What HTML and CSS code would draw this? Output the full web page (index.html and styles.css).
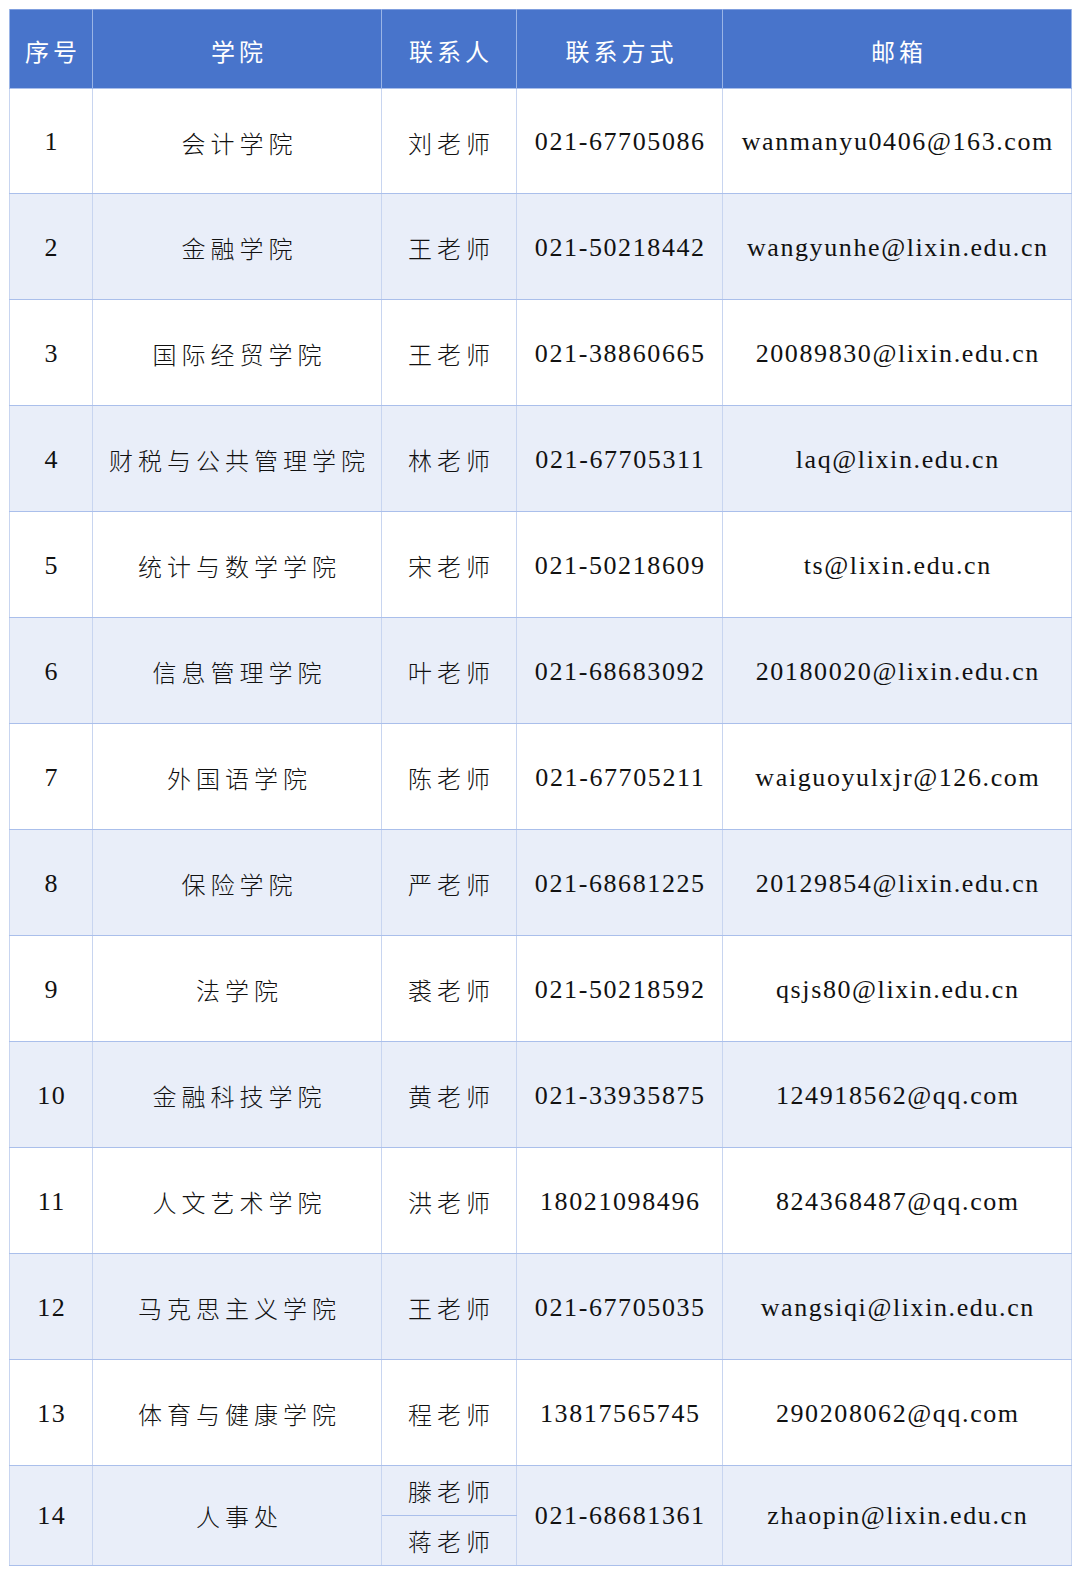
FILE: index.html
```html
<!DOCTYPE html>
<html lang="zh-CN">
<head>
<meta charset="utf-8">
<title>联系方式</title>
<link rel="stylesheet" href="styles.css">
</head>
<body>
<table class="contacts">
  <colgroup>
    <col class="c-no"><col class="c-school"><col class="c-person"><col class="c-phone"><col class="c-mail">
  </colgroup>
  <thead>
    <tr class="head"><th>序号</th><th>学院</th><th>联系人</th><th>联系方式</th><th>邮箱</th></tr>
  </thead>
  <tbody>
    <tr class="row first"><td class="lat">1</td><td class="zh">会计学院</td><td class="zh">刘老师</td><td class="lat">021-67705086</td><td class="lat">wanmanyu0406@163.com</td></tr>
    <tr class="row alt"><td class="lat">2</td><td class="zh">金融学院</td><td class="zh">王老师</td><td class="lat">021-50218442</td><td class="lat">wangyunhe@lixin.edu.cn</td></tr>
    <tr class="row"><td class="lat">3</td><td class="zh">国际经贸学院</td><td class="zh">王老师</td><td class="lat">021-38860665</td><td class="lat">20089830@lixin.edu.cn</td></tr>
    <tr class="row alt"><td class="lat">4</td><td class="zh">财税与公共管理学院</td><td class="zh">林老师</td><td class="lat">021-67705311</td><td class="lat">laq@lixin.edu.cn</td></tr>
    <tr class="row"><td class="lat">5</td><td class="zh">统计与数学学院</td><td class="zh">宋老师</td><td class="lat">021-50218609</td><td class="lat">ts@lixin.edu.cn</td></tr>
    <tr class="row alt"><td class="lat">6</td><td class="zh">信息管理学院</td><td class="zh">叶老师</td><td class="lat">021-68683092</td><td class="lat">20180020@lixin.edu.cn</td></tr>
    <tr class="row"><td class="lat">7</td><td class="zh">外国语学院</td><td class="zh">陈老师</td><td class="lat">021-67705211</td><td class="lat">waiguoyulxjr@126.com</td></tr>
    <tr class="row alt"><td class="lat">8</td><td class="zh">保险学院</td><td class="zh">严老师</td><td class="lat">021-68681225</td><td class="lat">20129854@lixin.edu.cn</td></tr>
    <tr class="row"><td class="lat">9</td><td class="zh">法学院</td><td class="zh">裘老师</td><td class="lat">021-50218592</td><td class="lat">qsjs80@lixin.edu.cn</td></tr>
    <tr class="row alt"><td class="lat">10</td><td class="zh">金融科技学院</td><td class="zh">黄老师</td><td class="lat">021-33935875</td><td class="lat">124918562@qq.com</td></tr>
    <tr class="row"><td class="lat">11</td><td class="zh">人文艺术学院</td><td class="zh">洪老师</td><td class="lat">18021098496</td><td class="lat">824368487@qq.com</td></tr>
    <tr class="row alt"><td class="lat">12</td><td class="zh">马克思主义学院</td><td class="zh">王老师</td><td class="lat">021-67705035</td><td class="lat">wangsiqi@lixin.edu.cn</td></tr>
    <tr class="row"><td class="lat">13</td><td class="zh">体育与健康学院</td><td class="zh">程老师</td><td class="lat">13817565745</td><td class="lat">290208062@qq.com</td></tr>
    <tr class="half alt"><td class="lat" rowspan="2">14</td><td class="zh" rowspan="2">人事处</td><td class="zh">滕老师</td><td class="lat" rowspan="2">021-68681361</td><td class="lat" rowspan="2">zhaopin@lixin.edu.cn</td></tr>
    <tr class="half alt"><td class="zh">蒋老师</td></tr>
  </tbody>
</table>
</body>
</html>
```

FILE: styles.css
```css
html, body {
  margin: 0;
  padding: 0;
  background: #ffffff;
}

body {
  padding: 9px 0 0 9px;
}

.contacts {
  border-collapse: collapse;
  table-layout: fixed;
  width: 1062px;
  border: 1px solid #7f9ede;
}

.c-no { width: 83px; }
.c-school { width: 289px; }
.c-person { width: 135px; }
.c-phone { width: 206px; }
.c-mail { width: 349px; }

.head {
  height: 79px;
  background: #4874cb;
}

.head th {
  color: #ffffff;
  font-family: "Noto Sans CJK SC", sans-serif;
  font-weight: 400;
  font-size: 24px;
  letter-spacing: 4px;
  text-indent: 4px;
  border-left: 1px solid #9ab4e6;
  border-right: 1px solid #9ab4e6;
  padding: 2px 0 0 0;
  text-align: center;
  vertical-align: middle;
}

.row { height: 106px; }
.row.first { height: 105px; }
.half { height: 50px; }

.alt { background: #e9eef9; }

.contacts td {
  border-top: 1px solid #aabfeb;
  border-bottom: 1px solid #aabfeb;
  border-left: 1px solid #c8d5f0;
  border-right: 1px solid #c8d5f0;
  padding: 2px 0 0 0;
  text-align: center;
  vertical-align: middle;
  color: #111111;
  white-space: nowrap;
  overflow: hidden;
}

.half td { padding-top: 0; }

.zh {
  font-family: "Noto Sans CJK SC", sans-serif;
  font-weight: 300;
  font-size: 24px;
  letter-spacing: 5px;
  text-indent: 5px;
}

.lat {
  font-family: "Liberation Serif", "Times New Roman", serif;
  font-size: 26px;
  letter-spacing: 1.6px;
  text-indent: 1.6px;
}
```
